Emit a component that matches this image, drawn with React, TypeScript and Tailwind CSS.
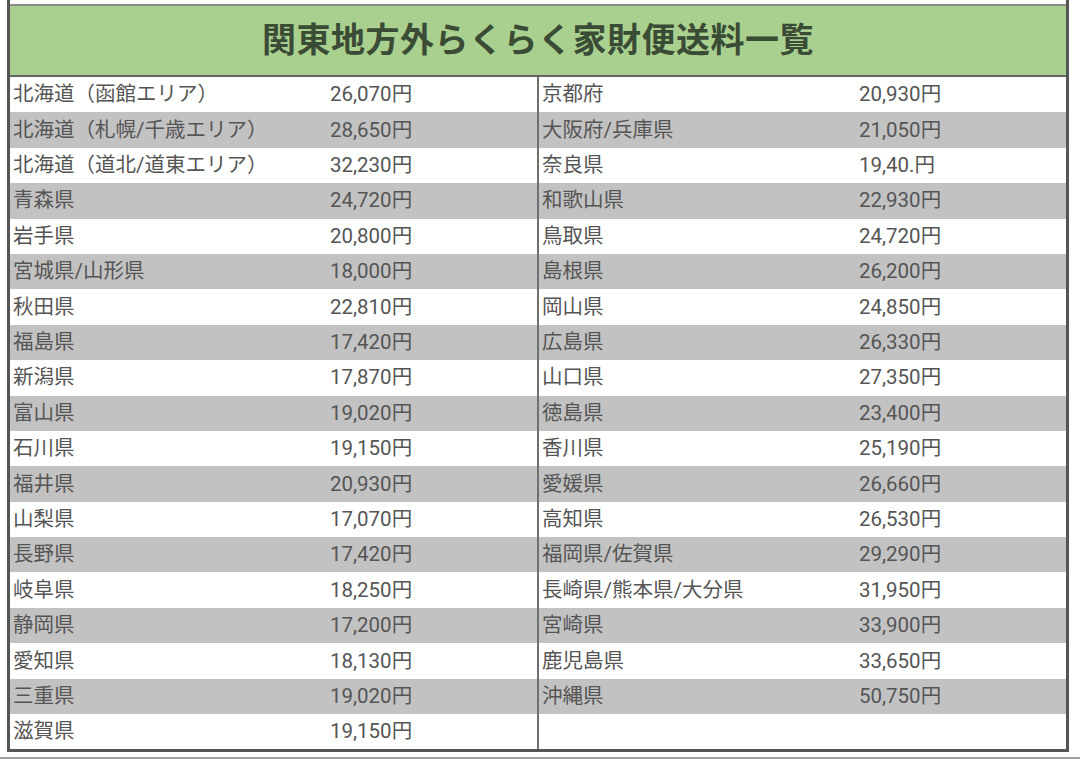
const left: [string, string][] = [
  ["北海道（函館エリア）", "26,070円"],
  ["北海道（札幌/千歳エリア）", "28,650円"],
  ["北海道（道北/道東エリア）", "32,230円"],
  ["青森県", "24,720円"],
  ["岩手県", "20,800円"],
  ["宮城県/山形県", "18,000円"],
  ["秋田県", "22,810円"],
  ["福島県", "17,420円"],
  ["新潟県", "17,870円"],
  ["富山県", "19,020円"],
  ["石川県", "19,150円"],
  ["福井県", "20,930円"],
  ["山梨県", "17,070円"],
  ["長野県", "17,420円"],
  ["岐阜県", "18,250円"],
  ["静岡県", "17,200円"],
  ["愛知県", "18,130円"],
  ["三重県", "19,020円"],
  ["滋賀県", "19,150円"],
];

const right: [string, string][] = [
  ["京都府", "20,930円"],
  ["大阪府/兵庫県", "21,050円"],
  ["奈良県", "19,40.円"],
  ["和歌山県", "22,930円"],
  ["鳥取県", "24,720円"],
  ["島根県", "26,200円"],
  ["岡山県", "24,850円"],
  ["広島県", "26,330円"],
  ["山口県", "27,350円"],
  ["徳島県", "23,400円"],
  ["香川県", "25,190円"],
  ["愛媛県", "26,660円"],
  ["高知県", "26,530円"],
  ["福岡県/佐賀県", "29,290円"],
  ["長崎県/熊本県/大分県", "31,950円"],
  ["宮崎県", "33,900円"],
  ["鹿児島県", "33,650円"],
  ["沖縄県", "50,750円"],
  ["", ""],
];

function Column({ rows }: { rows: [string, string][] }) {
  return (
    <div className="flex flex-col flex-1">
      {rows.map(([name, price], i) => (
        <div
          key={i}
          className={`flex items-center h-[35.4px] pl-[3px] ${
            i % 2 === 1 ? "bg-[#c2c2c2]" : "bg-white"
          }`}
        >
          <span className="w-[317px] shrink-0 whitespace-nowrap">{name}</span>
          <span>{price}</span>
        </div>
      ))}
    </div>
  );
}

export default function App() {
  return (
    <div
      className="w-[1080px] h-[760px] bg-white relative overflow-hidden"
      style={{ fontFamily: 'Roboto, "Noto Sans CJK JP", sans-serif' }}
    >
      <div className="ml-[7px] w-[1062px] border-x-[3px] border-b-[3px] border-[#555] pt-[4px]">
        <div className="border-t-2 border-[#8a8a8a] h-[73px] bg-[#a9d08e] border-b-2 border-b-[#666] flex items-center justify-center">
          <h1 className="text-[34px] font-bold text-[#3a4c35] tracking-[0.5px]">
            関東地方外らくらく家財便送料一覧
          </h1>
        </div>
        <div className="flex text-[20.5px] text-[#555]">
          <Column rows={left} />
          <div className="w-[2px] bg-[#6f6f6f]" />
          <Column rows={right} />
        </div>
      </div>
      <div className="mt-[5px] h-[2px] bg-[#a0a0a0]" />
    </div>
  );
}
